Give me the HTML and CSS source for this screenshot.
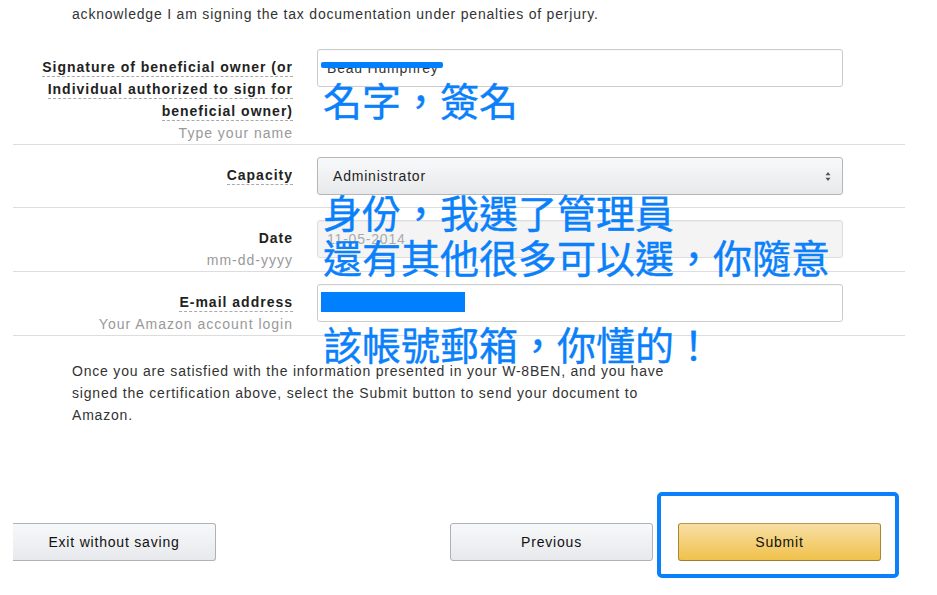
FILE: index.html
```html
<!DOCTYPE html>
<html lang="en">
<head>
<meta charset="utf-8">
<title>W-8BEN certification</title>
<link rel="stylesheet" href="styles.css">
</head>
<body>
<div class="page">
  <p class="intro">acknowledge I am signing the tax documentation under penalties of perjury.</p>

  <div class="form">
    <div class="row row-first">
      <div class="label">
        <span class="term">Signature of beneficial owner (or Individual authorized to sign for beneficial owner)</span>
        <div class="hint">Type your name</div>
      </div>
      <div class="control">
        <div class="input">Beau Humphrey<span class="redact redact-name"></span></div>
      </div>
    </div>

    <div class="row">
      <div class="label">
        <span class="term">Capacity</span>
      </div>
      <div class="control">
        <div class="select">
          <span>Administrator</span>
          <svg class="arrows" width="6" height="9" viewBox="0 0 6 9"><path d="M3 0 L5.5 3.2 L0.5 3.2 Z M3 9 L5.5 5.8 L0.5 5.8 Z" fill="#555"/></svg>
        </div>
      </div>
    </div>

    <div class="row">
      <div class="label">
        <span class="term plain">Date</span>
        <div class="hint">mm-dd-yyyy</div>
      </div>
      <div class="control">
        <div class="input input-disabled">11-05-2014</div>
      </div>
    </div>

    <div class="row">
      <div class="label">
        <span class="term">E-mail address</span>
        <div class="hint">Your Amazon account login</div>
      </div>
      <div class="control">
        <div class="input"><span class="redact redact-mail"></span></div>
      </div>
    </div>
    <div class="row-end"></div>
  </div>

  <p class="note">Once you are satisfied with the information presented in your W-8BEN, and you have signed the certification above, select the Submit button to send your document to Amazon.</p>

  <div class="actions">
    <button class="btn btn-exit" type="button">Exit without saving</button>
    <div class="actions-right">
      <button class="btn" type="button">Previous</button>
      <button class="btn btn-primary" type="button">Submit</button>
    </div>
  </div>

  <div class="annot annot-1">名字，簽名</div>
  <div class="annot annot-2">身份，我選了管理員<br>還有其他很多可以選，你隨意</div>
  <div class="annot annot-3">該帳號郵箱，你懂的！</div>
  <div class="highlight"></div>
</div>
</body>
</html>
```

FILE: styles.css
```css
* { box-sizing: border-box; }

html, body {
  margin: 0;
  padding: 0;
  background: #fff;
}

body {
  font-family: "Liberation Sans", Arial, sans-serif;
  font-size: 14px;
  letter-spacing: 0.8px;
  color: #333;
}

.page {
  position: relative;
  width: 937px;
  height: 595px;
  overflow: hidden;
}

.intro {
  margin: 0;
  padding: 3px 0 0 72px;
  line-height: 22px;
  height: 37px;
}

.form {
  margin-left: 13px;
  width: 892px;
}

.row {
  display: grid;
  grid-template-columns: 280px 526px;
  column-gap: 24px;
  padding-top: 12px;
  border-top: 1px solid #ddd;
}

.row-first {
  border-top: none;
}

.row-end {
  border-top: 1px solid #ddd;
}

.label {
  text-align: right;
  padding-top: 7px;
  line-height: 22px;
}

.term {
  font-weight: bold;
  color: #222;
  letter-spacing: 1px;
  border-bottom: 1px dashed #aaa;
  padding-bottom: 1px;
}

.term.plain {
  border-bottom: none;
}

.hint {
  color: #999;
  font-weight: normal;
  letter-spacing: 1px;
}

.control {
  margin-bottom: 12px;
}

.input {
  position: relative;
  height: 38px;
  border: 1px solid #ccc;
  border-radius: 3px;
  padding: 0 9px;
  line-height: 36px;
  color: #333;
  background: #fff;
  box-shadow: inset 0 1px 0 rgba(0,0,0,0.03);
}

.input-disabled {
  background: #f4f4f4;
  border-color: #ddd;
  color: #aaa;
}

.select {
  display: flex;
  align-items: center;
  justify-content: space-between;
  height: 38px;
  border: 1px solid #b3b6bb;
  border-radius: 3px;
  padding: 0 11px 0 15px;
  background: linear-gradient(#f8f9fa, #e8e9eb);
  color: #222;
}

.arrows {
  display: block;
}

.redact {
  position: absolute;
  background: #0080ff;
}

.redact-name {
  left: 3px;
  top: 12px;
  width: 122px;
  height: 6px;
  border-radius: 2px;
}

.redact-mail {
  left: 3px;
  top: 7px;
  width: 144px;
  height: 20px;
}

.note {
  margin: 24px 0 0 72px;
  width: 610px;
  line-height: 22px;
}

.actions {
  display: flex;
  justify-content: space-between;
  margin: 97px 0 0 13px;
  width: 868px;
}

.actions-right {
  display: flex;
  gap: 25px;
}

.btn {
  width: 203px;
  height: 38px;
  border: 1px solid #adb1b8;
  border-radius: 3px;
  background: linear-gradient(#f7f8fa, #e7e9ec);
  font-family: "Liberation Sans", Arial, sans-serif;
  font-size: 14px;
  letter-spacing: 0.8px;
  color: #111;
  padding: 0;
}

.btn-exit {
  border-left: none;
  border-top-left-radius: 0;
  border-bottom-left-radius: 0;
}

.btn-primary {
  background: linear-gradient(#f7dfa5, #f0c14b);
  border-color: #b89a4c #a88734 #9c7e31;
}

.annot {
  position: absolute;
  left: 323px;
  font-family: "Noto Sans CJK TC", "Noto Sans CJK SC", sans-serif;
  font-size: 39px;
  line-height: 45px;
  letter-spacing: 0;
  color: #0a80fb;
  -webkit-text-stroke: 0.4px #0a80fb;
  white-space: nowrap;
}

.annot-1 { top: 77px; }
.annot-2 { top: 189px; }
.annot-3 { top: 321px; }

.highlight {
  position: absolute;
  left: 657px;
  top: 492px;
  width: 242px;
  height: 86px;
  border: 4px solid #0a80fb;
  border-radius: 5px;
}
```
